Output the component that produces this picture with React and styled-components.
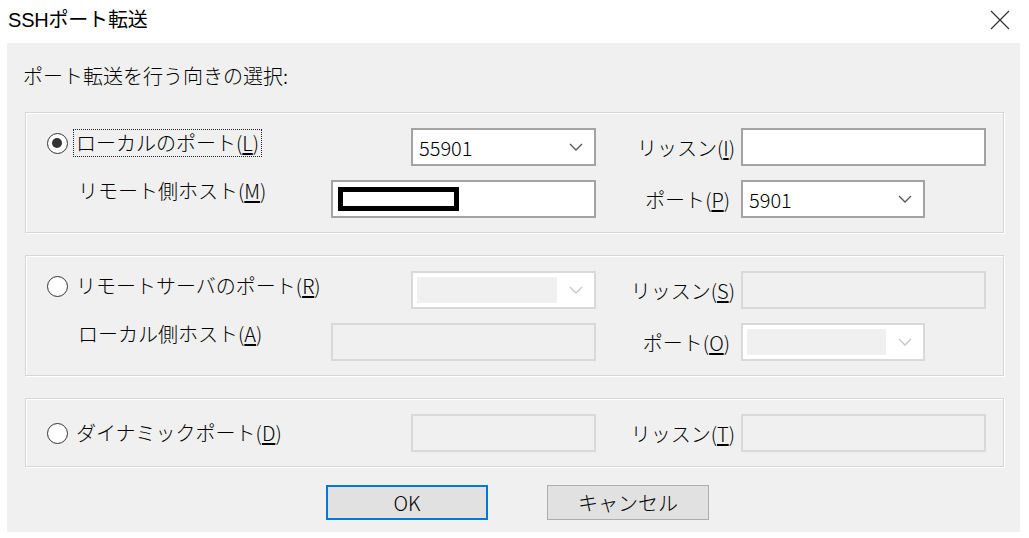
import React from "react";
import styled, { createGlobalStyle } from "styled-components";

const GlobalStyle = createGlobalStyle`
  html, body {
    margin: 0;
    padding: 0;
    background: #fff;
  }
  body {
    font-family: "Noto Sans CJK JP", "Noto Sans", sans-serif;
    font-weight: 300;
    color: #000;
  }
  * {
    box-sizing: border-box;
  }
`;

const Window = styled.div`
  width: 1029px;
  height: 538px;
  background: #fff;
  display: flex;
  flex-direction: column;
  padding: 0 9px 6px 7px;
`;

const TitleBar = styled.div`
  height: 43px;
  display: flex;
  align-items: center;
  justify-content: space-between;
  padding: 0 10px 4px 1px;
  font-size: 20px;
  line-height: 1;
`;

const TitleText = styled.span`
  font-family: "Liberation Sans", "Noto Sans CJK JP", sans-serif;
  font-weight: 400;
  letter-spacing: -0.2px;
`;

const Client = styled.div`
  flex: 1;
  background: #f0f0f0;
  padding: 20px 16px 0 18px;
  display: flex;
  flex-direction: column;
`;

const Heading = styled.div`
  font-size: 20px;
  line-height: 26px;
  height: 26px;
  margin: 0 0 23px -2px;
`;

const Group = styled.div`
  display: grid;
  grid-template-columns: 281px 80px 185px 145px 184px 61px;
  grid-auto-rows: 38px;
  row-gap: 14px;
  padding: 15px 17px 14px 24px;
  border: 1px solid #d6d6d6;
  box-shadow: inset 1px 1px 0 #fff, 1px 1px 0 #fff;
  margin-bottom: ${(p) => p.$gap}px;
`;

const RadioCell = styled.div`
  grid-column: 1 / span 2;
  display: flex;
  align-items: center;
  margin-left: -3px;
  transform: translateY(${(p) => p.$shift || 0}px);
`;

const RadioCircle = styled.span`
  position: relative;
  flex: none;
  width: 21px;
  height: 21px;
  border: 1.5px solid #333;
  border-radius: 50%;
  background: #fff;
  &::after {
    content: "";
    display: ${(p) => (p.$checked ? "block" : "none")};
    position: absolute;
    left: 4px;
    top: 4px;
    width: 10px;
    height: 10px;
    border-radius: 50%;
    background: #333;
  }
`;

const RadioText = styled.span`
  margin-left: 5px;
  padding: 1px 2px;
  font-size: 20px;
  line-height: 24px;
  white-space: nowrap;
  border: 1px ${(p) => (p.$focus ? "dotted #222" : "solid transparent")};
`;

const SubLabel = styled.div`
  grid-column: 1;
  display: flex;
  align-items: center;
  padding-left: 28px;
  font-size: 20px;
  white-space: nowrap;
  transform: translateY(${(p) => p.$shift || 0}px);
`;

const FieldLabel = styled.div`
  grid-column: 4;
  display: flex;
  align-items: center;
  justify-content: flex-end;
  padding-right: ${(p) => p.$pad}px;
  font-size: 20px;
  white-space: nowrap;
`;

const Key = styled.span`
  text-decoration: underline;
  text-underline-offset: 2px;
`;

const TextBox = styled.div`
  grid-column: ${(p) => p.$col};
  display: flex;
  align-items: center;
  padding: 0 5px;
  background: ${(p) => (p.$disabled ? "#f0f0f0" : "#fff")};
  border: 2px solid ${(p) => (p.$disabled ? "#d9d9d9" : "#a3a3a3")};
`;

const Combo = styled.div`
  grid-column: ${(p) => p.$col};
  display: flex;
  align-items: stretch;
  padding: 4px 11px 4px 4px;
  background: #fff;
  border: 2px solid ${(p) => (p.$disabled ? "#d9d9d9" : "#a3a3a3")};
`;

const ComboValue = styled.div`
  flex: 1;
  display: flex;
  align-items: center;
  padding-left: 2px;
  margin-right: 12px;
  font-size: 20px;
  background: ${(p) => (p.$disabled ? "#f0f0f0" : "transparent")};
`;

const Chevron = styled.svg`
  align-self: center;
  flex: none;
`;

const Redacted = styled.div`
  width: 121px;
  height: 24px;
  border: 5px solid #000;
  background: #fff;
`;

const ButtonRow = styled.div`
  display: flex;
  justify-content: center;
  gap: 59px;
  padding-left: 6px;
`;

const Button = styled.div`
  width: 162px;
  height: 35px;
  display: flex;
  align-items: center;
  justify-content: center;
  font-size: 20px;
  background: #e1e1e1;
  border: ${(p) => (p.$default ? "2px solid #0078d7" : "1px solid #adadad")};
`;

const ChevronIcon = ({ disabled }) => (
  <Chevron width="14" height="8" viewBox="0 0 14 8">
    <polyline
      points="1,1 7,7 13,1"
      fill="none"
      stroke={disabled ? "#c4c4c4" : "#555"}
      strokeWidth="1.3"
    />
  </Chevron>
);

const Label = ({ text, k }) => (
  <>
    {text}(<Key>{k}</Key>)
  </>
);

export default function App() {
  return (
    <>
      <GlobalStyle />
      <Window>
        <TitleBar>
          <TitleText>SSHポート転送</TitleText>
          <svg width="20" height="20" viewBox="0 0 20 20">
            <path d="M1 1 L19 19 M19 1 L1 19" stroke="#333" strokeWidth="1.2" />
          </svg>
        </TitleBar>
        <Client>
          <Heading>ポート転送を行う向きの選択:</Heading>

          <Group $gap={22}>
            <RadioCell $shift={-4}>
              <RadioCircle $checked />
              <RadioText $focus>
                <Label text="ローカルのポート" k="L" />
              </RadioText>
            </RadioCell>
            <Combo $col="3">
              <ComboValue>55901</ComboValue>
              <ChevronIcon />
            </Combo>
            <FieldLabel $pad={6}>
              <Label text="リッスン" k="I" />
            </FieldLabel>
            <TextBox $col="5 / span 2" />

            <SubLabel $shift={-9}>
              <Label text="リモート側ホスト" k="M" />
            </SubLabel>
            <TextBox $col="2 / span 2">
              <Redacted />
            </TextBox>
            <FieldLabel $pad={11}>
              <Label text="ポート" k="P" />
            </FieldLabel>
            <Combo $col="5">
              <ComboValue>5901</ComboValue>
              <ChevronIcon />
            </Combo>
          </Group>

          <Group $gap={22}>
            <RadioCell $shift={-4}>
              <RadioCircle />
              <RadioText>
                <Label text="リモートサーバのポート" k="R" />
              </RadioText>
            </RadioCell>
            <Combo $col="3" $disabled>
              <ComboValue $disabled />
              <ChevronIcon disabled />
            </Combo>
            <FieldLabel $pad={6}>
              <Label text="リッスン" k="S" />
            </FieldLabel>
            <TextBox $col="5 / span 2" $disabled />

            <SubLabel $shift={-9}>
              <Label text="ローカル側ホスト" k="A" />
            </SubLabel>
            <TextBox $col="2 / span 2" $disabled />
            <FieldLabel $pad={11}>
              <Label text="ポート" k="O" />
            </FieldLabel>
            <Combo $col="5" $disabled>
              <ComboValue $disabled />
              <ChevronIcon disabled />
            </Combo>
          </Group>

          <Group $gap={18}>
            <RadioCell>
              <RadioCircle />
              <RadioText>
                <Label text="ダイナミックポート" k="D" />
              </RadioText>
            </RadioCell>
            <TextBox $col="3" $disabled />
            <FieldLabel $pad={6}>
              <Label text="リッスン" k="T" />
            </FieldLabel>
            <TextBox $col="5 / span 2" $disabled />
          </Group>

          <ButtonRow>
            <Button $default>OK</Button>
            <Button>キャンセル</Button>
          </ButtonRow>
        </Client>
      </Window>
    </>
  );
}
